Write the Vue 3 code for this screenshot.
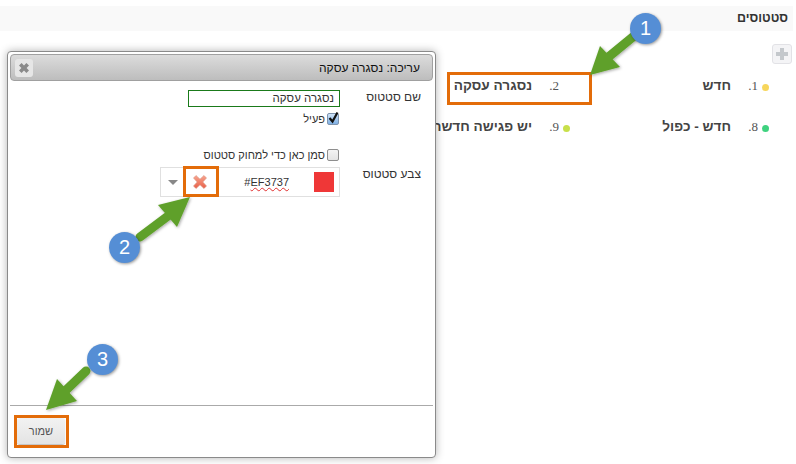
<template>
  <div class="page" dir="rtl">
    <div class="head">סטטוסים</div>
    <div class="add-row">
      <button class="add-btn">
        <svg width="14" height="14" viewBox="0 0 14 14"><path d="M5 1h4v4h4v4H9v4H5V9H1V5h4z" fill="#c4c8cc" /></svg>
      </button>
    </div>
    <div class="list">
      <div v-for="s in statuses" :key="s.num" class="item">
        <span class="dot" :style="{ background: s.color }"></span>
        <span class="num">{{ s.num }}.</span>
        <span class="name">{{ s.name }}</span>
      </div>
    </div>

    <div class="modal">
      <div class="titlebar">
        <span class="title">עריכה: נסגרה עסקה</span>
        <button class="close">
          <svg width="10" height="10" viewBox="0 0 10 10"><path d="M2.6 0L5 2.4 7.4 0 10 2.6 7.6 5 10 7.4 7.4 10 5 7.6 2.6 10 0 7.4 2.4 5 0 2.6z" fill="#8a8a8a" /></svg>
        </button>
      </div>
      <div class="body">
        <div class="row">
          <label class="lbl">שם סטטוס</label>
          <div class="fields">
            <div class="text-input">נסגרה עסקה</div>
            <label class="check">
              <span class="cb on">
                <svg width="13" height="14" viewBox="0 0 13 14"><path d="M2.5 7l3 3.5L10.5 1.5" fill="none" stroke="#111" stroke-width="2.2" /></svg>
              </span>פעיל
            </label>
            <label class="check del"><span class="cb"></span>סמן כאן כדי למחוק סטטוס</label>
          </div>
        </div>
        <div class="row color-row">
          <label class="lbl">צבע סטטוס</label>
          <div class="picker">
            <span class="swatch"></span>
            <span class="hex" dir="ltr">#<span class="typo">EF3737</span></span>
            <span class="clear">
              <svg width="16" height="16" viewBox="0 0 16 16">
                <defs>
                  <linearGradient id="xg" x1="0" y1="0" x2="0" y2="1">
                    <stop offset="0" stop-color="#f7a58f" />
                    <stop offset="1" stop-color="#e85f48" />
                  </linearGradient>
                </defs>
                <path d="M4 1.5L8 5.2 12 1.5 14.5 4 10.8 8 14.5 12 12 14.5 8 10.8 4 14.5 1.5 12 5.2 8 1.5 4z" fill="url(#xg)" stroke="#d9937f" stroke-width=".6" stroke-linejoin="round" />
              </svg>
            </span>
            <span class="caret"></span>
          </div>
        </div>
      </div>
      <div class="footer">
        <button class="save">שמור</button>
      </div>
    </div>

    <span class="box box1"></span>
    <span class="box box2"></span>
    <span class="box box3"></span>

    <svg class="arrows" width="796" height="464" viewBox="0 0 796 464">
      <defs>
        <filter id="sh" x="-30%" y="-30%" width="160%" height="160%">
          <feDropShadow dx="1" dy="1" stdDeviation="1.5" flood-color="#000" flood-opacity=".35" />
        </filter>
      </defs>
      <g filter="url(#sh)">
        <path d="M634 36L606 59" stroke="#5fa02a" stroke-width="9" stroke-linecap="round" />
        <path d="M590 75L600 46L620 67z" fill="#5fa02a" />
      </g>
      <g filter="url(#sh)">
        <path d="M140 237L168 216" stroke="#5fa02a" stroke-width="9" stroke-linecap="round" />
        <path d="M190 197L158 205L177 227z" fill="#5fa02a" />
      </g>
      <g filter="url(#sh)">
        <path d="M86 371L63 393" stroke="#5fa02a" stroke-width="9" stroke-linecap="round" />
        <path d="M46 410L57 379L77 401z" fill="#5fa02a" />
      </g>
    </svg>

    <span class="badge b1">1</span>
    <span class="badge b2">2</span>
    <span class="badge b3">3</span>
  </div>
</template>

<script setup>
const statuses = [
  { num: 1, name: 'חדש', color: '#f7d65c' },
  { num: 2, name: 'נסגרה עסקה', color: 'transparent' },
  { num: 8, name: 'חדש - כפול', color: '#3fd27f' },
  { num: 9, name: 'יש פגישה חדשה', color: '#c8e04a' }
]
</script>

<style>
html, body {
  background: #fff;
  overflow: hidden;
}
</style>

<style scoped>
.page {
  position: relative;
  width: 796px;
  height: 464px;
  overflow: hidden;
  box-sizing: border-box;
  padding: 6px 3px 0 0;
  font-family: "Liberation Sans", Arial, sans-serif;
  font-size: 12px;
  color: #333;
  background: #fff;
}

.head {
  height: 25px;
  line-height: 25px;
  padding-right: 5px;
  background: #f9f9f9;
  font-size: 12.5px;
  font-weight: bold;
}

.add-row {
  display: flex;
  padding: 13px 1px 0 0;
}

.add-btn {
  width: 20px;
  height: 20px;
  padding: 0;
  display: flex;
  align-items: center;
  justify-content: center;
  background: #f4f4f6;
  border: 1px solid #e2e2e6;
  border-radius: 3px;
}

.list {
  display: grid;
  grid-template-columns: 199px 199px;
  grid-auto-rows: 41px;
  margin-top: 6px;
  padding-right: 24px;
}

.item {
  display: flex;
  align-items: center;
  height: 32px;
  white-space: nowrap;
}

.dot {
  width: 7px;
  height: 7px;
  border-radius: 50%;
  margin-top: 2px;
}

.num {
  width: 13px;
  margin: 0 4px 0 0;
  font-family: "Liberation Serif", serif;
  font-size: 13px;
  color: #555;
}

.name {
  margin-right: 14px;
  font-size: 13.6px;
  font-weight: bold;
  color: #444;
  margin-top: -2px;
}

.modal {
  position: absolute;
  left: 7px;
  top: 51px;
  width: 429px;
  height: 407px;
  box-sizing: border-box;
  display: flex;
  flex-direction: column;
  padding: 2px;
  background: #fff;
  border: 1px solid #8a8a8a;
  border-radius: 4px;
  box-shadow: 0 0 8px rgba(0, 0, 0, .3);
}

.titlebar {
  height: 27px;
  box-sizing: border-box;
  display: flex;
  align-items: center;
  justify-content: space-between;
  padding: 0 12px 0 4px;
  background: linear-gradient(#dcdcdc, #bdbdbd);
  border: 1px solid #a0a0a0;
  border-radius: 4px;
}

.title {
  font-size: 12px;
  color: #111;
}

.close {
  width: 18px;
  height: 18px;
  padding: 0;
  display: flex;
  align-items: center;
  justify-content: center;
  background: #e6e6e6;
  border: 0;
  border-radius: 3px;
}

.body {
  flex: 1;
  padding: 9px 12px 0 0;
}

.row {
  display: flex;
  align-items: flex-start;
}

.lbl {
  width: 81px;
  font-size: 12px;
  line-height: 14px;
  color: #333;
}

.fields {
  display: flex;
  flex-direction: column;
  align-items: flex-start;
}

.text-input {
  width: 152px;
  height: 17px;
  box-sizing: border-box;
  padding: 0 5px;
  line-height: 15px;
  font-size: 11.5px;
  color: #333;
  border: 1px solid #1a7a1a;
}

.check {
  display: flex;
  align-items: center;
  height: 15px;
  margin-top: 4px;
  font-size: 11px;
  color: #333;
}

.cb {
  position: relative;
  width: 12px;
  height: 12px;
  box-sizing: border-box;
  margin: 0 1px 0 2px;
  background: linear-gradient(#f4f4f4, #e4e4e4);
  border: 1px solid #8e8e8e;
  border-radius: 2px;
}

.cb.on {
  background: linear-gradient(#cfe3f7, #7fb0e4);
  border-color: #7d93ad;
}

.cb svg {
  position: absolute;
  left: -1px;
  top: -3px;
}

.del {
  margin-top: 21px;
}

.color-row {
  margin-top: 5px;
}

.picker {
  width: 180px;
  height: 30px;
  box-sizing: border-box;
  display: flex;
  align-items: center;
  border: 1px solid #e0e0e0;
}

.swatch {
  width: 20px;
  height: 20px;
  margin-right: 5px;
  background: #ef3737;
}

.hex {
  margin-right: 25px;
  font-size: 11px;
  color: #333;
}

.typo {
  text-decoration: underline wavy #e03030 1px;
}

.clear {
  display: flex;
  margin-right: 36px;
}

.caret {
  margin-right: 14px;
  width: 0;
  height: 0;
  border-left: 5px solid transparent;
  border-right: 5px solid transparent;
  border-top: 5px solid #888;
}

.footer {
  height: 50px;
  box-sizing: border-box;
  display: flex;
  padding: 12px 0 0 7px;
  justify-content: flex-end;
  border-top: 1px solid #aaa;
}

.save {
  width: 48px;
  height: 26px;
  padding: 0;
  font-family: inherit;
  font-size: 11px;
  color: #555;
  background: linear-gradient(#f2f2f2, #e4e4e4);
  border: 0;
  border-radius: 3px;
  box-shadow: 0 1px 1px rgba(0, 0, 0, .25);
}

.box {
  position: absolute;
  box-sizing: border-box;
  border: 3px solid #e36c09;
}

.box1 { left: 447px; top: 72px; width: 145px; height: 33px; }
.box2 { left: 183px; top: 166px; width: 36px; height: 31px; }
.box3 { left: 14px; top: 415px; width: 55px; height: 33px; }

.arrows {
  position: absolute;
  left: 0;
  top: 0;
  pointer-events: none;
}

.badge {
  position: absolute;
  width: 31px;
  height: 31px;
  display: flex;
  align-items: center;
  justify-content: center;
  border-radius: 50%;
  background: #558ed5;
  color: #fff;
  font-size: 20px;
  box-shadow: 1px 1px 3px rgba(0, 0, 0, .4);
}

.b1 { left: 630px; top: 13px; }
.b2 { left: 109px; top: 232px; }
.b3 { left: 87px; top: 344px; }
</style>
